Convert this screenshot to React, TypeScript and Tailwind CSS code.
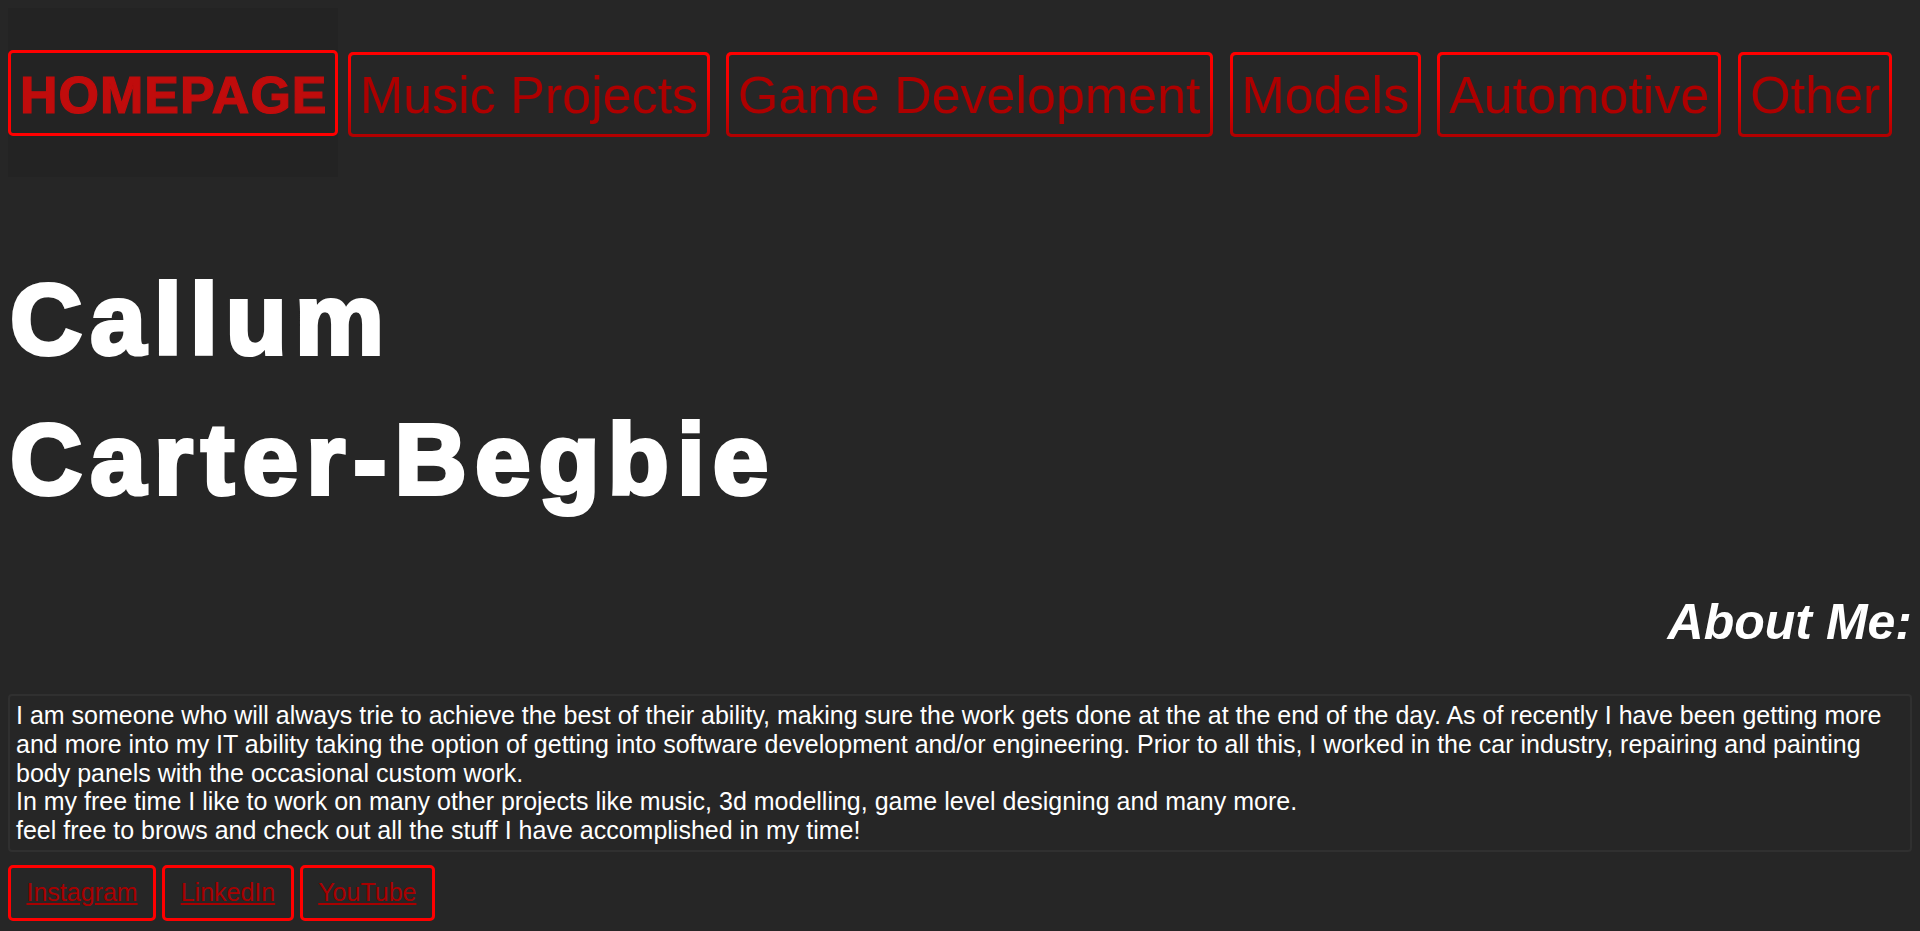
import React from "react";

const navItems = [
  { label: "Music Projects", ml: "ml-[10px]" },
  { label: "Game Development", ml: "ml-[16px]" },
  { label: "Models", ml: "ml-[17px]" },
  { label: "Automotive", ml: "ml-[16px]" },
  { label: "Other", ml: "ml-[17px]" },
];

function NavItem({ label, ml }: { label: string; ml: string }) {
  return (
    <a
      href="#"
      className={`${ml} mt-[44px] block rounded-[5px] p-[3px] bg-[linear-gradient(180deg,#ff0000_0%,#ee0000_45%,#b00000_100%)]`}
    >
      <span className="block rounded-[3px] bg-[#262626] px-[9px] py-[9.5px] text-[52px] leading-[60px] text-[#ad0000] whitespace-nowrap">
        {label}
      </span>
    </a>
  );
}

export default function App() {
  return (
    <div className="min-h-screen bg-[#262626] p-2 font-['Liberation_Sans',Arial,sans-serif] text-white">
      <nav className="flex items-start">
        <div className="w-[330px] bg-[#232323] pt-[42px] pb-[41px]">
          <h1 className="rounded-[5px] border-[3px] border-[#ff0000] pl-[9px] pr-[8px] pt-[12px] pb-[8px] text-[52px] font-bold leading-[60px] tracking-[1px] text-[#c00c0c] whitespace-nowrap [-webkit-text-stroke:1.2px_#c00c0c]">
            HOMEPAGE
          </h1>
        </div>
        {navItems.map((n) => (
          <NavItem key={n.label} label={n.label} ml={n.ml} />
        ))}
      </nav>

      <h1 className="mt-[72px] pl-[2px] text-[100px] font-bold leading-[140px] tracking-[8.1px] text-white [-webkit-text-stroke:4px_white]">
        Callum
        <br />
        Carter-Begbie
      </h1>

      <h2 className="mt-[65px] text-right text-[50px] font-bold italic leading-[56px] text-white">
        About Me:
      </h2>

      <div className="mt-[44px] rounded-[4px] border-2 border-[#303030] px-[6px] py-[5px] text-[25px] leading-[28.75px] text-white">
        I am someone who will always trie to achieve the best of their ability, making sure the work gets done at the at the end of the day. As of recently I have been getting more and more into my IT ability taking the option of getting into software development and/or engineering. Prior to all this, I worked in the car industry, repairing and painting body panels with the occasional custom work.
        <br />
        In my free time I like to work on many other projects like music, 3d modelling, game level designing and many more.
        <br />
        feel free to brows and check out all the stuff I have accomplished in my time!
      </div>

      <div className="mt-[13px] flex gap-[6px]">
        {["Instagram", "LinkedIn", "YouTube"].map((l) => (
          <a
            key={l}
            href="#"
            className="block rounded-[5px] border-[3px] border-[#ff0000] px-[15.5px] py-[10.5px] text-[25px] leading-[28.75px] text-[#a80000] underline"
          >
            {l}
          </a>
        ))}
      </div>
    </div>
  );
}
